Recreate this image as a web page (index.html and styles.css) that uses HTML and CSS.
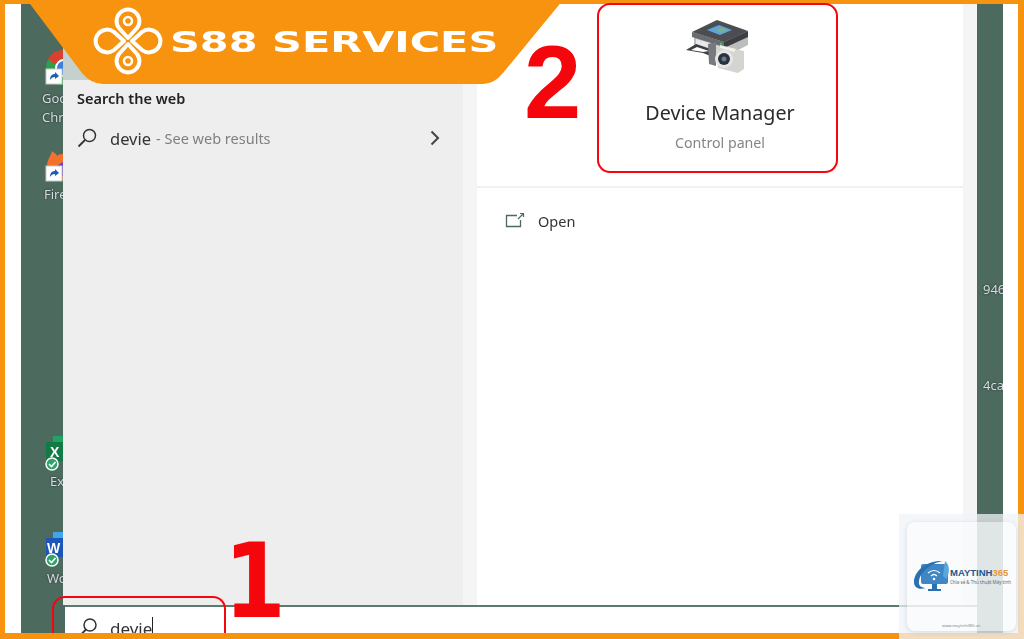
FILE: index.html
```html
<!DOCTYPE html>
<html>

<head>
    <meta charset="utf-8">
    <title>S88 Services - Device Manager</title>
    <link rel="stylesheet" href="styles.css">
</head>

<body>
    <div class="page">
        <div class="screen">
            <div class="desktop">
                <div class="desk-col">
                    <div class="desk-item chrome">
                        <svg width="42" height="36" viewBox="0 0 42 36">
                            <circle cx="43" cy="19" r="18" fill="#2f9e4f" />
                            <path d="M27 10A18 18 0 0 1 43 1V12L33 15Z" fill="#d8402f" />
                            <circle cx="43" cy="19" r="8" fill="#3f7fe0" stroke="#fff" stroke-width="2" />
                            <rect x="25" y="20" width="16" height="15" fill="#fff" stroke="#c9c9c9" />
                            <path d="M29 31C29 27 31 25 34 25V23L38 27L34 30V28C32 28 30 29 29 31Z" fill="#1f5fae" />
                        </svg>
                        <div class="desk-label">Goo<br>Chro</div>
                    </div>
                    <div class="desk-item firefox">
                        <svg width="42" height="36" viewBox="0 0 42 36">
                            <path d="M26 17C26 9 30 6 31 1C33 3 35 3 36 6C38 4 40 4 42 4V30H30C27 28 26 23 26 17Z" fill="#f2712b" />
                            <path d="M36 16L42 12V26L36 24Z" fill="#6b3fc0" />
                            <rect x="25" y="16" width="16" height="15" fill="#fff" stroke="#c9c9c9" />
                            <path d="M29 27C29 23 31 21 34 21V19L38 23L34 26V24C32 24 30 25 29 27Z" fill="#1f5fae" />
                        </svg>
                        <div class="desk-label">Fire</div>
                    </div>
                    <div class="desk-item excel">
                        <svg width="42" height="36" viewBox="0 0 42 36">
                            <rect x="32" y="0" width="10" height="8" fill="#1fa463" />
                            <rect x="25" y="6" width="17" height="19" fill="#127a45" />
                            <text x="29" y="21" class="badge-letter">X</text>
                            <circle cx="31" cy="28" r="6" fill="#2fa36b" stroke="#fff" stroke-width="1.5" />
                            <path d="M28 28L30.5 30.5L34.5 26" fill="none" stroke="#fff" stroke-width="1.6" />
                        </svg>
                        <div class="desk-label">Ex</div>
                    </div>
                    <div class="desk-item word">
                        <svg width="42" height="36" viewBox="0 0 42 36">
                            <rect x="32" y="0" width="10" height="8" fill="#41a5ee" />
                            <rect x="25" y="6" width="17" height="19" fill="#1d56b8" />
                            <text x="26" y="21" class="badge-letter">W</text>
                            <circle cx="31" cy="28" r="6" fill="#2fa36b" stroke="#fff" stroke-width="1.5" />
                            <path d="M28 28L30.5 30.5L34.5 26" fill="none" stroke="#fff" stroke-width="1.6" />
                        </svg>
                        <div class="desk-label">Wo</div>
                    </div>
                </div>

                <div class="start">
                    <div class="panes">
                        <div class="results">
                            <div class="results-head">Search the web</div>
                            <div class="result-row">
                                <svg class="glass" width="20" height="20" viewBox="0 0 20 20">
                                    <circle cx="12.5" cy="7.5" r="6" fill="none" stroke="#333" stroke-width="1.5" />
                                    <path d="M8 12L1.5 18.5" stroke="#333" stroke-width="1.8" />
                                </svg>
                                <span class="query">devie</span>
                                <span class="query-note">- See web results</span>
                                <svg class="chevron" width="10" height="16" viewBox="0 0 10 16">
                                    <path d="M1.5 1.5L8 8L1.5 14.5" fill="none" stroke="#444" stroke-width="2" />
                                </svg>
                            </div>
                        </div>
                        <div class="gutter"></div>
                        <div class="preview">
                            <div class="hero">
                                <svg class="device-icon" width="70" height="60" viewBox="0 0 70 60">
                                    <path d="M8 13L33 3L62 13V26L40 37L8 26Z" fill="#bdbdbd" />
                                    <path d="M6 13L31 1L62 12L38 23Z" fill="#4a4d52" />
                                    <path d="M21 11L33 6L46 11L34 16Z" fill="#5fa3d8" />
                                    <path d="M30 11L36 9L41 11L35 14Z" fill="#7fb08a" />
                                    <path d="M6 13L38 23V28L6 18Z" fill="#6a6c70" />
                                    <path d="M38 23L62 12V18L38 29Z" fill="#3c3e42" />
                                    <path d="M10 20L27 25V30L10 25Z" fill="#e8e8e8" />
                                    <path d="M0 31L10 25L27 31V38L17 34Z" fill="#3c3e42" />
                                    <path d="M5 31L11 28L23 32L17 33Z" fill="#fff" />
                                    <path d="M29 26L58 32V50L52 54L32 49Z" fill="#d4d4d0" />
                                    <path d="M22 25L30 23V47L23 45Z" fill="#77797c" />
                                    <path d="M34 26L50 30L48 33L34 29Z" fill="#f2f2ea" />
                                    <circle cx="38" cy="40" r="9" fill="#e6e6e6" />
                                    <circle cx="38" cy="40" r="6" fill="#2e3238" />
                                    <circle cx="38" cy="40" r="2.5" fill="#5a7d99" />
                                    <circle cx="35" cy="25" r="1.2" fill="#49c060" />
                                </svg>
                                <div class="hero-title">Device Manager</div>
                                <div class="hero-sub">Control panel</div>
                            </div>
                            <div class="action">
                                <svg width="20" height="18" viewBox="0 0 20 18">
                                    <path d="M12 3.5H1.5V14.5H15.5V8" fill="none" stroke="#4d6a5e" stroke-width="1.3" />
                                    <path d="M13 7L18 2M15 1.5H18.5V5" fill="none" stroke="#4d6a5e" stroke-width="1.2" />
                                </svg>
                                <span>Open</span>
                            </div>
                        </div>
                        <div class="gutter gutter-end"></div>
                    </div>
                    <div class="search-bar">
                        <svg width="20" height="20" viewBox="0 0 20 20">
                            <circle cx="12" cy="8" r="6" fill="none" stroke="#333" stroke-width="1.5" />
                            <path d="M8 12.5L2 18.5" stroke="#333" stroke-width="1.8" />
                        </svg>
                        <span class="search-text">devie</span>
                    </div>
                </div>

                <div class="desk-end">
                    <div class="desk-label end-one">946</div>
                    <div class="desk-label end-two">4ca</div>
                </div>
            </div>
        </div>

        <div class="banner">
            <svg class="banner-shape" width="540" height="84" viewBox="0 0 540 84">
                <path d="M0 0H536L476 73Q467 84 456 84H76Q64 84 55 73Z" fill="#f7930f" />
                <g transform="translate(101 41)" fill="none" stroke="#fff" stroke-width="4">
                    <path d="M0 -3L-9 -13A11.4 11.4 0 1 1 9 -13Z" stroke-linejoin="round" />
                    <path d="M0 3L-9 13A11.4 11.4 0 1 0 9 13Z" stroke-linejoin="round" />
                    <path d="M-3 0L-13 -9A11.4 11.4 0 1 0 -13 9Z" stroke-linejoin="round" transform="translate(-1 0)" />
                    <path d="M3 0L13 -9A11.4 11.4 0 1 1 13 9Z" stroke-linejoin="round" transform="translate(1 0)" />
                    <circle cx="0" cy="-20" r="4" stroke-width="2.5" />
                    <circle cx="0" cy="20" r="4" stroke-width="2.5" />
                </g>
            </svg>
            <div class="banner-text">S88 SERVICES</div>
        </div>

        <div class="step step-two">2</div>
        <div class="step step-one">1</div>
        <div class="mark mark-device"></div>
        <div class="mark mark-search"></div>

        <div class="watermark">
            <div class="wm-card">
                <div class="wm-logo">
                    <svg width="38" height="34" viewBox="0 0 38 34">
                        <rect x="8" y="5" width="27" height="20" rx="2" fill="#3f86c6" />
                        <path d="M1 23C1 12 14 1 30 2C22 3 8 10 6 22C5 27 9 29 13 29C6 31 1 29 1 23Z" fill="#2a6fb0" />
                        <path d="M32 2C37 6 37 14 33 20L30 17Z" fill="#5ba6dc" />
                        <path d="M15 14Q21 9 27 14M18 17Q21 14 24 17" fill="none" stroke="#fff" stroke-width="1.2" />
                        <circle cx="21" cy="20" r="1.3" fill="#fff" />
                        <path d="M19 25H24V30H28V32H15V30H19Z" fill="#2a6fb0" />
                    </svg>
                    <div class="wm-words">
                        <div class="wm-name">MAYTINH<span class="wm-num">365</span></div>
                        <div class="wm-tag">Chia sẻ &amp; Thủ thuật Máy tính</div>
                    </div>
                </div>
                <div class="wm-url">www.maytinh365.vn</div>
            </div>
        </div>
    </div>
</body>

</html>
```

FILE: styles.css
```css
* {
    box-sizing: border-box;
}

body {
    margin: 0;
    font-family: 'Noto Sans', sans-serif;
    overflow: hidden;
}

.page {
    position: relative;
    width: 1024px;
    height: 639px;
    padding: 4px 6px 6px 5px;
    background: #f7930f;
    display: flex;
    overflow: hidden;
}

.screen {
    flex: 1;
    display: flex;
    min-width: 0;
    padding: 0 15px 0 16px;
    background: #fff;
}

.desktop {
    flex: 1;
    display: flex;
    min-width: 0;
    background: #4d6a5e;
    overflow: hidden;
    filter: blur(0.45px);
}

/* desktop icons, cut off by the start panel */
.desk-col {
    width: 42px;
    flex: none;
    padding-top: 45px;
    overflow: hidden;
}

.desk-item svg {
    display: block;
}

.desk-label {
    padding-left: 21px;
    font-size: 13px;
    line-height: 19px;
    color: #d5dcdc;
    text-shadow: 0 0 2px #1c2a30;
    white-space: nowrap;
}

.chrome .desk-label {
    margin-top: 4px;
}

.firefox {
    margin-top: 23px;
}

.firefox .desk-label {
    margin-top: -1px;
    padding-left: 23px;
}

.excel {
    margin-top: 232px;
}

.excel .desk-label {
    padding-left: 29px;
}

.word {
    margin-top: 41px;
}

.word .desk-label {
    margin-top: 1px;
    padding-left: 26px;
}

.badge-letter {
    font-family: 'Liberation Sans', sans-serif;
    font-weight: bold;
    font-size: 14px;
    fill: #fff;
}

.start {
    width: 914px;
    flex: none;
    display: flex;
    flex-direction: column;
}

.panes {
    height: 601px;
    display: flex;
}

.results {
    width: 400px;
    padding: 84px 14px 0 14px;
    background: linear-gradient(#c5d1cd 76px, #eeeeee 76px);
}

.results-head {
    font-size: 14.5px;
    font-weight: 600;
    line-height: 20px;
    color: #222;
}

.result-row {
    margin-top: 18px;
    display: flex;
    align-items: center;
    height: 24px;
}

.glass {
    margin-right: 13px;
}

.query {
    font-size: 16.5px;
    color: #333;
    margin-right: 5px;
}

.query-note {
    font-size: 14.5px;
    color: #808080;
}

.chevron {
    margin-left: auto;
    margin-right: 9px;
}

.gutter {
    width: 14px;
    background: #f5f5f5;
}

.preview {
    width: 486px;
    background: #fff;
}

.hero {
    height: 184px;
    padding-top: 15px;
    border-bottom: 2px solid #f1f1f1;
    display: flex;
    flex-direction: column;
    align-items: center;
}

.device-icon {
    margin-left: 2px;
}

.hero-title {
    margin-top: 19px;
    font-size: 19.7px;
    line-height: 30px;
    color: #2b2b2b;
}

.hero-sub {
    margin-top: 5px;
    font-size: 14.2px;
    line-height: 20px;
    color: #858585;
}

.action {
    margin-top: 23px;
    padding-left: 28px;
    display: flex;
    align-items: center;
    gap: 13px;
    font-size: 14.5px;
    color: #333;
}

.search-bar {
    flex: 1;
    margin-left: 2px;
    padding: 10px 0 0 13px;
    display: flex;
    align-items: flex-start;
    gap: 12px;
    background: #fff;
    border-top: 2px solid #5c7a6e;
    overflow: hidden;
}

.search-text {
    font-size: 17px;
    line-height: 24px;
    color: #333;
    border-right: 1.5px solid #222;
}

.desk-end {
    flex: 1;
    overflow: hidden;
}

.desk-end .desk-label {
    padding-left: 6px;
}

.end-one {
    margin-top: 276px;
}

.end-two {
    margin-top: 77px;
}

/* overlays drawn over the screenshot */
.banner {
    position: absolute;
    top: 0;
    left: 27px;
    width: 540px;
    height: 84px;
}

.banner-shape {
    display: block;
}

.banner-text {
    position: absolute;
    top: 21px;
    left: 143px;
    font-family: 'DejaVu Sans', sans-serif;
    font-weight: bold;
    font-size: 29px;
    line-height: 42px;
    color: #fff;
    white-space: nowrap;
    transform: scaleX(1.43);
    transform-origin: left center;
}

.step {
    position: absolute;
    color: #f5050c;
    font-weight: bold;
    line-height: 1;
}

.step-two {
    top: 31px;
    left: 524px;
    font-family: 'Liberation Sans', sans-serif;
    font-size: 103px;
}

.step-one {
    top: 530px;
    left: 224px;
    font-family: 'DejaVu Sans', sans-serif;
    font-size: 103px;
    transform: scaleX(0.86);
    transform-origin: left center;
}

.mark {
    position: absolute;
    border: 2px solid #f5050c;
}

.mark-device {
    top: 3px;
    left: 597px;
    width: 241px;
    height: 170px;
    border-radius: 13px;
}

.mark-search {
    top: 596px;
    left: 52px;
    width: 174px;
    height: 37px;
    border-bottom: none;
    border-radius: 13px 13px 0 0;
}

.watermark {
    position: absolute;
    right: 0;
    bottom: 0;
    width: 125px;
    height: 125px;
    padding: 8px;
    background: rgba(240, 244, 248, 0.75);
}

.wm-card {
    position: relative;
    height: 109px;
    width: 109px;
    border-radius: 8px;
    background: rgba(255, 255, 255, 0.45);
    box-shadow: 0 1px 5px rgba(120, 130, 150, 0.25);
    padding: 37px 0 0 6px;
}

.wm-logo {
    display: flex;
    align-items: center;
}

.wm-words {
    margin-left: -1px;
}

.wm-name {
    font-family: 'Liberation Sans', sans-serif;
    font-size: 9.5px;
    font-weight: bold;
    line-height: 12px;
    color: #23598f;
    white-space: nowrap;
}

.wm-num {
    color: #e8963a;
}

.wm-tag {
    font-size: 4.5px;
    line-height: 6px;
    color: #5f6a78;
    white-space: nowrap;
}

.wm-url {
    position: absolute;
    left: 35px;
    bottom: 3px;
    font-size: 4px;
    color: #7d8590;
    white-space: nowrap;
}
```
